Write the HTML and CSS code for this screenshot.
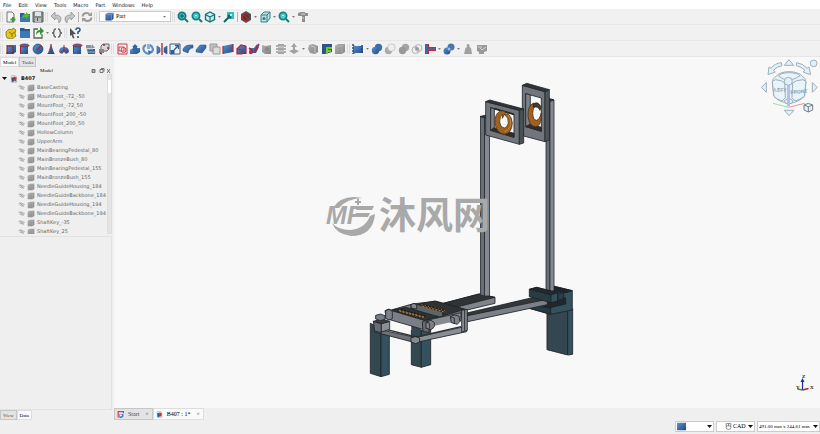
FILE: index.html
```html
<!DOCTYPE html>
<html lang="en">
<head>
<meta charset="utf-8">
<title>B407</title>
<link rel="stylesheet" href="styles.css">
</head>
<body>
<svg class="defs" aria-hidden="true">
  <defs>
    <linearGradient id="blue" x1="0" y1="0" x2="1" y2="1"><stop offset="0" stop-color="#5d93cf"/><stop offset="1" stop-color="#1f4a86"/></linearGradient>
    <linearGradient id="gray" x1="0" y1="0" x2="1" y2="1"><stop offset="0" stop-color="#b0b0b0"/><stop offset="1" stop-color="#858585"/></linearGradient>
    <symbol id="new" viewBox="0 0 12 12"><path d="M2 1h5l2 2v8H2z" fill="#f4f4f2" stroke="#777"/><path d="M8 6v5M5.500 8.500h5" stroke="#3f9b3a" stroke-width="2"/></symbol>
    <symbol id="open" viewBox="0 0 12 12"><path d="M1 2h4l1 1h5v8H1z" fill="#2b5c98"/><path d="M1 6h10v5H1z" fill="#3c76b8"/><path d="M3 7q0-4 4-4V1l4 3.500L7 8V6Q5 6 3 7z" fill="#58b63e"/></symbol>
    <symbol id="save" viewBox="0 0 12 12"><path d="M1 1h10v10H1z" fill="#85898a" stroke="#5d6264"/><path d="M3 1h6v4H3z" fill="#dce5e7"/><path d="M3 7h6v4H3z" fill="#b8bcbc"/><path d="M5 7h1v3H5z" fill="#555"/></symbol>
    <symbol id="undo" viewBox="0 0 12 12"><path d="M1 5l4-4v3q6 0 6 4 0 2-2 4 0-5-4-5v2z" fill="#c7c7c7" stroke="#929292" stroke-width=".8"/></symbol>
    <symbol id="redo" viewBox="0 0 12 12"><path d="M11 5L7 1v3Q1 4 1 8q0 2 2 4 0-5 4-5v2z" fill="#c7c7c7" stroke="#929292" stroke-width=".8"/></symbol>
    <symbol id="refresh" viewBox="0 0 12 12"><path d="M1.500 5.500Q2 2 6 2q2 0 3 2M10.500 6.500Q10 10 6 10 4 10 3 8" fill="none" stroke="#9a9a9a" stroke-width="2"/><path d="M11 1v4H7zM1 11V7h4z" fill="#9a9a9a"/></symbol>
    <symbol id="zoomall" viewBox="0 0 12 12"><circle cx="5" cy="5" r="3.600" fill="#45c5c2" stroke="#157a7c" stroke-width="1.800"/><path d="M8 8l3 3" stroke="#157a7c" stroke-width="2"/><path d="M5 3v4M3 5h4" stroke="#0a5558"/></symbol>
    <symbol id="zoomsel" viewBox="0 0 12 12"><circle cx="5" cy="5" r="3.600" fill="#55cfca" stroke="#168486" stroke-width="1.800"/><path d="M8 8l3 3" stroke="#157a7c" stroke-width="2"/><path d="M4 4h2v1H4z" fill="#fff"/></symbol>
    <symbol id="iso" viewBox="0 0 12 12"><path d="M6 1l4.500 2.500v5L6 11 1.500 8.500v-5z" fill="#d5f1ef" stroke="#187577" stroke-width="1.400"/><path d="M1.500 3.500L6 6l4.500-2.500M6 6v5" fill="none" stroke="#187577" stroke-width="1.200"/></symbol>
    <symbol id="viewlink" viewBox="0 0 12 12"><path d="M4 1h7v7H4z" fill="#2ebfc0"/><path d="M1 11l5-5M5 4l3 3" stroke="#116568" stroke-width="2"/><path d="M7 3h2v2H7z" fill="#b9f1ef"/></symbol>
    <symbol id="stop" viewBox="0 0 12 12"><path d="M6 0l5 3v6l-5 3-5-3V3z" fill="#1c6c70"/><circle cx="6" cy="6" r="3.600" fill="#284448" stroke="#b81e22" stroke-width="1.600"/><path d="M3.500 3.500l5 5" stroke="#c51c20" stroke-width="1.600"/></symbol>
    <symbol id="boxview" viewBox="0 0 12 12"><path d="M2 4l3-3h6v6l-3 4H2z" fill="#bee0df" stroke="#2e8688"/><path d="M2 4h6v7M8 4l3-3" fill="none" stroke="#2e8688"/><circle cx="5" cy="7.500" r="1.500" fill="#248184"/></symbol>
    <symbol id="measure" viewBox="0 0 12 12"><path d="M1 2l3-1h4v1h3v3H8v6H5V5H1z" fill="#8d8d8d"/><path d="M4 3h4M5 7h2" stroke="#d2d2d2"/></symbol>
    <symbol id="part" viewBox="0 0 12 12"><path d="M1 5l3-3 3 1 1-2 3 2-1 3 1 3-4 3-5-1-1-3z" fill="#e2c423" stroke="#8c7514" stroke-width=".8"/><path d="M4 5l3 2 3-2M7 7v3" fill="none" stroke="#92790c"/></symbol>
    <symbol id="folder" viewBox="0 0 12 12"><path d="M1 1h4l1 1h5v9H1z" fill="#28598f"/><path d="M1 4h10v7H1z" fill="#3f76b4"/></symbol>
    <symbol id="swatch" viewBox="0 0 12 12"><path d="M0 1h12v10H0z" fill="url(#blue)"/></symbol>
    <symbol id="link" viewBox="0 0 12 12"><path d="M6 2H2v9h8V7" fill="#f6f6f6" stroke="#5c655d" stroke-width="1.300"/><path d="M4 8q0-5 4-5V0l4 4-4 4V5q-2 0-4 3z" fill="#38903a"/></symbol>
    <symbol id="braces" viewBox="0 0 12 12"><path d="M5 2Q3 2 3 4q0 2-2 2 2 0 2 2 0 2 2 2M7 2q2 0 2 2 0 2 2 2-2 0-2 2 0 2-2 2" fill="none" stroke="#666" stroke-width="1.400"/></symbol>
    <symbol id="whats" viewBox="0 0 12 12"><path d="M1 1l6 6-3 .300L5.500 11 4 11.500 2.500 8 1 9z" fill="#4d5559"/><path d="M7 3q0-2 2-2t2 2q0 1-2 2v2M9 9v2" fill="none" stroke="#31567d" stroke-width="1.600"/></symbol>
    <symbol id="cube" viewBox="0 0 12 12"><path d="M1 3l3-1.500h7V9l-2.500 2H1z" fill="url(#blue)" stroke="#173a66" stroke-width=".6"/><path d="M8.500 3v8M1 3h8l2-1.500" fill="none" stroke="#88aed8" stroke-width=".8"/></symbol>
    <symbol id="box" viewBox="0 0 12 12"><path d="M2 3l2-1h7v7l-3 2H2z" fill="url(#blue)"/><path d="M2 2v9M1 10h8M8 3v8M2 3h6" fill="none" stroke="#7d2334"/></symbol>
    <symbol id="cylinder" viewBox="0 0 12 12"><path d="M3 2h7v9H3z" fill="url(#blue)"/><ellipse cx="6.500" cy="2.500" rx="4.500" ry="1.500" fill="#396da8" stroke="#8a2539" stroke-width=".8"/><path d="M2.500 3v8" stroke="#9b2638"/></symbol>
    <symbol id="sphere" viewBox="0 0 12 12"><circle cx="6" cy="6" r="5" fill="url(#blue)" stroke="#183b67" stroke-width=".6"/><path d="M5 7l4-4" stroke="#a62438" stroke-width="1.300"/></symbol>
    <symbol id="cone" viewBox="0 0 12 12"><path d="M6 1l3 9H3z" fill="url(#blue)"/><path d="M6 1v9M2.500 10.500h7" stroke="#8b2437"/></symbol>
    <symbol id="torus" viewBox="0 0 12 12"><path d="M1 9q0-5 5-5t5 5l-3 2-2-2-2 2z" fill="url(#blue)"/><path d="M6 2v5M2 10l4-3 4 3" fill="none" stroke="#9d293a"/></symbol>
    <symbol id="prims" viewBox="0 0 12 12"><path d="M1 2h5v3H1z" fill="#8c9299"/><path d="M2 6h8v5H3z" fill="#365f8d"/><path d="M7 1l3 4H6z" fill="#8795a5"/><path d="M1 6h7M3 9h8" stroke="#a9b6c4"/></symbol>
    <symbol id="shapebuild" viewBox="0 0 12 12"><path d="M3 3l2-2h6v5L9 8H3z" fill="#d8d8d8" stroke="#666"/><path d="M1 6h5v4H1z" fill="#888"/><path d="M5 2h2M10 4v2M2 10l2 1" stroke="#b22332" stroke-width="1.500"/></symbol>
    <symbol id="sketch" viewBox="0 0 12 12"><path d="M2 1h9v10H2z" fill="#faf4f4" stroke="#c53e44"/><path d="M3 4h5v4H3z" fill="none" stroke="#d1434b"/><circle cx="7.500" cy="7" r="2.500" fill="none" stroke="#d1434b"/></symbol>
    <symbol id="extrude" viewBox="0 0 12 12"><path d="M1 7l3-2h7v4l-3 2H1z" fill="url(#blue)"/><path d="M3 4l3-3 3 3H8v4H4V4z" fill="#32689f"/></symbol>
    <symbol id="revolve" viewBox="0 0 12 12"><path d="M4 2Q1 3 1.500 6.500 3 11 7 10.500M8 2q3 2 3 5l-2 3" fill="none" stroke="#5f8dbf" stroke-width="2.200"/><path d="M5 1h3v5H5z" fill="#8cb0d8"/><path d="M6 7l4 2-3 3z" fill="#396b9f"/></symbol>
    <symbol id="mirror" viewBox="0 0 12 12"><path d="M1 3l3 2v4l-3 2zM11 3L8 5v4l3 2z" fill="url(#blue)" stroke="#315e92" stroke-width=".7"/><path d="M6 0v12" stroke="#b52a3c" stroke-width="1.400"/></symbol>
    <symbol id="scale" viewBox="0 0 12 12"><path d="M1 1h10v10H1z" fill="#edf2f7" stroke="#345b86"/><path d="M1.500 7h4v4h-4z" fill="#315f92"/><path d="M5 7l4-4M6 2.500h3.500V6" fill="none" stroke="#315f92" stroke-width="1.300"/></symbol>
    <symbol id="fillet" viewBox="0 0 12 12"><path d="M1 6q2-4 6-4h4v3Q7 5 6 10L1 8z" fill="url(#blue)" stroke="#234f86" stroke-width=".5"/></symbol>
    <symbol id="chamfer" viewBox="0 0 12 12"><path d="M1 7l4-5h6v3l-4 5-6-1z" fill="url(#blue)" stroke="#234f86" stroke-width=".5"/></symbol>
    <symbol id="faces" viewBox="0 0 12 12"><path d="M1 1h7v7H1z" fill="#c2c2c2" stroke="#999"/><path d="M4 4h7v7H4z" fill="#ddd" stroke="#999"/></symbol>
    <symbol id="ruled" viewBox="0 0 12 12"><path d="M1 3l10-2v8L1 11z" fill="url(#blue)"/><path d="M1 3v8M11 1v8" stroke="#b32739" stroke-width="1.200"/></symbol>
    <symbol id="loft" viewBox="0 0 12 12"><path d="M2 6l4-4 5 1v8H2z" fill="url(#blue)"/><path d="M2 6l4-4 5 1M2 6v5h5V7zM11 3v8" fill="none" stroke="#b5243a" stroke-width="1.200"/></symbol>
    <symbol id="sweep" viewBox="0 0 12 12"><path d="M1 5h5l3-4 2 3-3 6H2z" fill="url(#blue)"/><path d="M7 8l4-7M1 5l3 2-2 4" fill="none" stroke="#b72339" stroke-width="1.600"/><circle cx="3" cy="9" r="2" fill="#af263b"/></symbol>
    <symbol id="section" viewBox="0 0 12 12"><path d="M1 2l4 1 5-1v9H4l-3-2z" fill="url(#gray)"/><circle cx="6" cy="6" r="2" fill="#8a8a8a"/></symbol>
    <symbol id="cross" viewBox="0 0 12 12"><path d="M1 3h10M1 6h10M1 9h10" stroke="#989898" stroke-width="1.600"/><path d="M3 1h6v10H3z" fill="#a5a5a5"/><path d="M3 4h6M3 8h6" stroke="#d8d8d8"/></symbol>
    <symbol id="offset" viewBox="0 0 12 12"><path d="M1 8l5-2 5 2-5 3zM6 0l3 4H7v3H5V4H3z" fill="#a2a2a2"/></symbol>
    <symbol id="thick" viewBox="0 0 12 12"><path d="M2 2l4-1 5 2v6l-3 2-5-1-2-4z" fill="url(#gray)"/><path d="M4 3l4 1v6" fill="none" stroke="#c2c2c2"/></symbol>
    <symbol id="project" viewBox="0 0 12 12"><path d="M1 1h10v8l-7 2H1z" fill="#27568d"/><path d="M5 4h6v2H7v1h3v2H7v2H5z" fill="#74cc25"/></symbol>
    <symbol id="graybox" viewBox="0 0 12 12"><path d="M1 3l3-2h7v8l-3 2H1z" fill="url(#gray)"/><path d="M1 3h7v8M8 3l3-2" fill="none" stroke="#b2b2b2" stroke-width=".7"/></symbol>
    <symbol id="compound" viewBox="0 0 12 12"><path d="M1 2l3 1h7v7H4l-3 1z" fill="url(#blue)"/><path d="M1 1v10M10 2v9" stroke="#244b7b" stroke-width="1.500" stroke-dasharray="2 1"/></symbol>
    <symbol id="boolean" viewBox="0 0 12 12"><circle cx="7.500" cy="4.500" r="3.700" fill="#396fae"/><circle cx="4.500" cy="7.500" r="3.700" fill="url(#blue)"/></symbol>
    <symbol id="cut" viewBox="0 0 12 12"><circle cx="4.500" cy="7.500" r="3.700" fill="#aaa"/><circle cx="7.500" cy="4.500" r="3.700" fill="#eee" stroke="#bbb" stroke-width=".7"/></symbol>
    <symbol id="union" viewBox="0 0 12 12"><circle cx="7.500" cy="4.500" r="3.700" fill="#a5a5a5"/><circle cx="4.500" cy="7.500" r="3.700" fill="#999"/></symbol>
    <symbol id="common" viewBox="0 0 12 12"><circle cx="7.500" cy="5" r="3.500" fill="none" stroke="#b2b2b2"/><circle cx="4.500" cy="7" r="3.500" fill="none" stroke="#b2b2b2"/><path d="M4.500 4Q8 4 8 7.500 4 8 4.500 4z" fill="#999"/></symbol>
    <symbol id="join" viewBox="0 0 12 12"><path d="M1 1h4v3h7v4H5v3H1z" fill="#b92c3d"/><path d="M2.500 1v10M4 6h8" stroke="#3c6fa9" stroke-width="1.600"/></symbol>
    <symbol id="split" viewBox="0 0 12 12"><circle cx="8" cy="4" r="3.500" fill="#4777ae"/><circle cx="4" cy="8" r="3.500" fill="url(#blue)"/><circle cx="6" cy="6" r="1.500" fill="#a2bdd9"/></symbol>
    <symbol id="weight" viewBox="0 0 12 12"><path d="M3.500 5L5 4Q4 1 6 1t1.500 3L9 5l1 6H2z" fill="#a0a0a0"/></symbol>
    <symbol id="check" viewBox="0 0 12 12"><path d="M1 2h10v6L8 9v2H3V9L1 8z" fill="#999"/><path d="M4 5l2 2 4-3M2 4h4" fill="none" stroke="#d5d5d5"/></symbol>
    <symbol id="doc" viewBox="0 0 12 12"><path d="M2 1h6l2 2v8H2z" fill="#eee" stroke="#aaa"/><path d="M2 4l4-1 1 6-4 2z" fill="#235b91"/><path d="M6 2l4 2-1 6-3-2z" fill="#c83434"/></symbol>
    <symbol id="start" viewBox="0 0 12 12"><path d="M2 11V1h9v3" fill="none" stroke="#dc3945" stroke-width="2"/><path d="M4 5h7v4l-3 3H4z" fill="#3b83d2"/><path d="M5 6h3v3H5z" fill="#fff"/></symbol>
    <symbol id="hidden" viewBox="0 0 12 12"><path d="M1 5q5-3 10 1-4 5-8 1M3 2l7 8" fill="none" stroke="#999" stroke-width="1.200"/><circle cx="6" cy="6" r="1.500" fill="#aaa"/></symbol>
    <symbol id="mouse" viewBox="0 0 12 12"><path d="M2 1h8v7q0 3-4 3T2 8z" fill="#fff" stroke="#444"/><path d="M6 1v4M2 5h8" stroke="#444"/></symbol>
  </defs>
</svg>

<div class="app">
  <nav class="menu">
    <a href="#">File</a><a href="#">Edit</a><a href="#">View</a><a href="#">Tools</a><a href="#">Macro</a><a href="#">Part</a><a href="#">Windows</a><a href="#">Help</a>
  </nav>

  <div class="toolbar">
    <i class="grip"></i>
    <div class="run w39"><button><svg><use href="#new"/></svg></button><button><svg><use href="#open"/></svg></button><button><svg><use href="#save"/></svg></button></div>
    <i class="grip"></i>
    <div class="run w26"><button><svg><use href="#undo"/></svg></button><button><svg><use href="#redo"/></svg></button></div>
    <i class="line"></i>
    <button><svg><use href="#refresh"/></svg></button>
    <i class="grip"></i>
    <label class="combo bench"><svg><use href="#cube"/></svg><select aria-label="Workbench"><option>Part</option></select><i class="caret"></i></label>
    <i class="grip"></i>
    <div class="run w39"><button><svg><use href="#zoomall"/></svg></button><button><svg><use href="#zoomsel"/></svg></button><button><svg><use href="#iso"/></svg></button></div>
    <i class="caret"></i>
    <button><svg><use href="#viewlink"/></svg></button>
    <i class="line"></i>
    <button><svg><use href="#stop"/></svg></button><i class="caret"></i>
    <button><svg><use href="#boxview"/></svg></button><i class="caret"></i>
    <button><svg><use href="#zoomsel"/></svg></button><i class="caret"></i>
    <button><svg><use href="#measure"/></svg></button>
  </div>

  <div class="toolbar">
    <i class="grip"></i>
    <div class="run w39"><button><svg><use href="#part"/></svg></button><button><svg><use href="#folder"/></svg></button><button><svg><use href="#link"/></svg></button></div>
    <i class="caret"></i>
    <button><svg><use href="#braces"/></svg></button>
    <i class="grip"></i>
    <button><svg><use href="#whats"/></svg></button>
  </div>

  <div class="toolbar">
    <i class="grip"></i>
    <div class="run w105"><button><svg><use href="#box"/></svg></button><button><svg><use href="#cylinder"/></svg></button><button><svg><use href="#sphere"/></svg></button><button><svg><use href="#cone"/></svg></button><button><svg><use href="#torus"/></svg></button><button><svg><use href="#cylinder"/></svg></button><button><svg><use href="#prims"/></svg></button><button><svg><use href="#shapebuild"/></svg></button></div>
    <i class="grip"></i>
    <div class="run w184"><button><svg><use href="#sketch"/></svg></button><button><svg><use href="#extrude"/></svg></button><button><svg><use href="#revolve"/></svg></button><button><svg><use href="#mirror"/></svg></button><button><svg><use href="#scale"/></svg></button><button><svg><use href="#fillet"/></svg></button><button><svg><use href="#chamfer"/></svg></button><button><svg><use href="#faces"/></svg></button><button><svg><use href="#ruled"/></svg></button><button><svg><use href="#loft"/></svg></button><button><svg><use href="#sweep"/></svg></button><button><svg><use href="#section"/></svg></button><button><svg><use href="#cross"/></svg></button><button><svg><use href="#offset"/></svg></button></div>
    <i class="caret"></i>
    <div class="run w39"><button><svg><use href="#thick"/></svg></button><button><svg><use href="#project"/></svg></button><button><svg><use href="#graybox"/></svg></button></div>
    <i class="grip"></i>
    <button><svg><use href="#compound"/></svg></button>
    <i class="caret"></i>
    <div class="run w65"><button><svg><use href="#boolean"/></svg></button><button><svg><use href="#cut"/></svg></button><button><svg><use href="#union"/></svg></button><button><svg><use href="#common"/></svg></button><button><svg><use href="#join"/></svg></button></div>
    <i class="caret"></i>
    <button><svg><use href="#split"/></svg></button>
    <i class="caret"></i>
    <div class="run w26"><button><svg><use href="#weight"/></svg></button><button><svg><use href="#check"/></svg></button></div>
  </div>

  <div class="work">
    <aside class="side">
      <div class="tabs top"><button class="tab on">Model</button><button class="tab">Tasks</button></div>
      <header class="dock"><span>Model</span>
        <svg viewBox="0 0 20 6"><path d="M1 1.500h3v3H1zM1 3h3M9 1.500h3v3H9zM10 .5h3v3M16 1l3 4M19 1l-3 4" fill="none" stroke="#555" stroke-width=".8"/></svg>
      </header>
      <div class="treebox">
        <ul class="tree">
          <li class="root"><i class="open"></i><svg><use href="#doc"/></svg><b>B407</b></li>
          <li><svg><use href="#hidden"/></svg><svg><use href="#graybox"/></svg>BaseCasting</li>
          <li><svg><use href="#hidden"/></svg><svg><use href="#graybox"/></svg>MountFoot_-72_-50</li>
          <li><svg><use href="#hidden"/></svg><svg><use href="#graybox"/></svg>MountFoot_-72_50</li>
          <li><svg><use href="#hidden"/></svg><svg><use href="#graybox"/></svg>MountFoot_200_-50</li>
          <li><svg><use href="#hidden"/></svg><svg><use href="#graybox"/></svg>MountFoot_200_50</li>
          <li><svg><use href="#hidden"/></svg><svg><use href="#graybox"/></svg>HollowColumn</li>
          <li><svg><use href="#hidden"/></svg><svg><use href="#graybox"/></svg>UpperArm</li>
          <li><svg><use href="#hidden"/></svg><svg><use href="#graybox"/></svg>MainBearingPedestal_80</li>
          <li><svg><use href="#hidden"/></svg><svg><use href="#graybox"/></svg>MainBronzeBush_80</li>
          <li><svg><use href="#hidden"/></svg><svg><use href="#graybox"/></svg>MainBearingPedestal_155</li>
          <li><svg><use href="#hidden"/></svg><svg><use href="#graybox"/></svg>MainBronzeBush_155</li>
          <li><svg><use href="#hidden"/></svg><svg><use href="#graybox"/></svg>NeedleGuideHousing_184</li>
          <li><svg><use href="#hidden"/></svg><svg><use href="#graybox"/></svg>NeedleGuideBackbone_184</li>
          <li><svg><use href="#hidden"/></svg><svg><use href="#graybox"/></svg>NeedleGuideHousing_194</li>
          <li><svg><use href="#hidden"/></svg><svg><use href="#graybox"/></svg>NeedleGuideBackbone_194</li>
          <li><svg><use href="#hidden"/></svg><svg><use href="#graybox"/></svg>ShaftKey_-35</li>
          <li><svg><use href="#hidden"/></svg><svg><use href="#graybox"/></svg>ShaftKey_25</li>
        </ul>
        <div class="scroll"><i></i></div>
      </div>
      <div class="props"></div>
      <div class="tabs bottom"><button class="tab">View</button><button class="tab on">Data</button></div>
    </aside>

    <main class="mdi">
      <svg class="scene" viewBox="114 57 706 351">
        <g transform="translate(355 270) scale(.3333)" stroke="#1d2226" stroke-width="2.500" stroke-linejoin="round">
          <path d="M576 128l62-8v135l-62-16z" fill="#34464f"/><path d="M638 120l15-4v137l-13 2-2-1z" fill="#34515f"/>
          <path d="M594 48l58 14v58l-65 13-64-18v-9l70-20z" fill="#34515f"/>
          <path d="M523 106l64 8v19l-64-18z" fill="#293941"/>
          <path d="M594 48l58 14-24 7-34-8z" fill="#1d272b"/>
          <path d="M600 84l32-1v19l-46 11-42-10z" fill="#20282c"/><path d="M608 70l18-3v19l-18 6z" fill="#2c3d46"/>
        </g>
        <g stroke="#23272b" stroke-width=".8">
          <path d="M546 99h4v195h-4z" fill="#686e75"/><path d="M550 99l4 1v190l-4 3z" fill="#868b93"/>
        </g>
        <g transform="translate(355 270) scale(.3333)" stroke="#1d2226" stroke-width="2.500" stroke-linejoin="round">
          <path d="M335 132l210-50 32 8v14l-239 51z" fill="#7b8087"/><path d="M335 129l210-49 32 8-240 49z" fill="#35383b"/>
          <path d="M523 58l22-6 63 16v25l-20 5-65-18z" fill="#293b44"/><path d="M523 58l22-6 63 16-20 7z" fill="#202a2e"/><path d="M588 75l20-7v25l-20 5z" fill="#34515f"/>
          <path d="M250 104l122-32 48 10v18l-92 22z" fill="#80848a"/><path d="M250 104l122-32 48 10-118 30z" fill="#303335"/>
        </g>
        <g stroke="#23272b" stroke-width=".8">
          <path d="M480.500 116l4 1v179l-4-1z" fill="#686e75"/><path d="M484.500 117l5-1v180h-5z" fill="#858a92"/>
        </g>
        <g transform="translate(355 270) scale(.3333)" stroke="#1f2225" stroke-width="2.500" stroke-linejoin="round">
          <path d="M46 160l32 15v145l-32-10z" fill="#344850"/><path d="M78 185l25 5v123l-25 7z" fill="#34515f"/>
          <path d="M169 165l30 15v112l-30-8z" fill="#344850"/><path d="M199 182l28-6v108l-28 8z" fill="#34515f"/>
          <path d="M168 103l12-2 60-7 95 26v17l-80 24-150-40z" fill="#74797f"/>
          <path d="M185 103l56-10 90 25-70 20z" fill="#303234"/>
          <path d="M168 104l12-3 83 25v13l-20 3-75-25z" fill="#5f646a"/><path d="M113 120l38-8 100 28-42 12z" fill="#303234"/>
          <path d="M90 122l12-5 8 5 100 30v28l-116-34z" fill="#7a7f86"/><path d="M210 152l108-24v24l-108 28z" fill="#868b92"/>
          <path d="M114 157l55 13v10l-60-8zM236 168l44-10 35-2v14l-79 18z" fill="#f8f8f8" stroke="none"/>
          <path d="M62 176l122 27-4 15-122-32z" fill="#6c7278"/><path d="M180 203l148-33 7 6v9l-155 33z" fill="#898e95"/>
          <path d="M72 173l112 28 134-31" fill="none" stroke="#303336" stroke-width="4"/>
          <path d="M320 121l17-3v63l-17 5z" fill="#858a91"/><path d="M329 120v62" fill="none"/>
          <path d="M55 154l24 7v27l-20-5z" fill="#666d73"/><path d="M79 161l25-7v24l-25 8z" fill="#8b9096"/><path d="M55 154l25-7 24 7-25 7z" fill="#3a3e41"/>
          <path d="M62 136l14-4 14 5v11l-14 4-14-5z" fill="#787e84"/><path d="M92 122l10-4 10 6v22l-10 4-10-5z" fill="#7c8289"/><path d="M168 104l9-4 8 5v12l-16-3z" fill="#858a91"/>
          <path d="M202 156l10-5 10 3v34l-18-4z" fill="#676d74"/><path d="M168 203l14-3 12 4v12l-12 5-14-5z" fill="#858a91"/>
          <path d="M213 156l15-5 10 7v12l-10 9-15-4z" fill="#7e8389"/><path d="M286 140l12-5 14 3 3 16-8 9-18-5z" fill="#7e8389"/><path d="M286 140l12 4v18M213 156l11 4v16" fill="none"/>
          <path d="M203 108l68 18M134 123l74 19" fill="none" stroke="#b57624" stroke-width="5" stroke-dasharray="5 5"/>
          <path d="M203 104l68 18M138 119l74 19" fill="none" stroke="#17191a" stroke-width="4" stroke-dasharray="6 4"/>
          <path d="M200 104l70 18M132 121l74 19" fill="none" stroke="#d09b42" stroke-width="2" stroke-dasharray="3 7"/>
        </g>
        <g transform="translate(465 75) scale(.3333)" stroke="#23272a" stroke-width="2.500" stroke-linejoin="round">
          <path d="M243 75l10-4 14 4-10 4z" fill="#313538"/>
          <path fill-rule="evenodd" d="M172 31l68 19v150l-68-18zM182 56v99l47 14V69z" fill="#70767c"/>
          <path d="M240 50l13-6v151l-13 5z" fill="#51565b"/><path d="M172 31l13-6 68 19-13 6z" fill="#303437"/>
          <path d="M182 56l14 4v90l-14 5z" fill="#7d8288"/><path d="M182 155l14-8 33 10v12z" fill="#2b2d2f"/>
          <path d="M206 84q-18 8-17 38 3 31 22 33 16 0 18-29v-12q-6 22-15 22-10-1-11-22 0-14 9-24z" fill="#9f6022" stroke="#51300f"/><path d="M204 88q14-12 24 8l-3 10q-6-14-19-9z" fill="#4a3a2c"/>
          <path d="M46 125l12-4 16 4-10 5z" fill="#313538"/>
          <path fill-rule="evenodd" d="M62 80l101 26v102L62 180zM77 98v68l70 21v-69z" fill="#70767c"/>
          <path d="M163 106l13-4v102l-13 4z" fill="#4a4f54"/><path d="M62 80l12-5 102 27-13 4z" fill="#303437"/>
          <path d="M77 98l11 3v57l-11 8z" fill="#7d8288"/><path d="M77 166l11-8 59 17v12z" fill="#2b2d2f"/><path d="M88 101l59 17" fill="none" stroke-width="5"/>
          <path d="M106 108q-18 9-16 38 5 29 28 32 22-2 24-34-1-17-13-28l-10 2q13 11 11 27-3 13-12 14-13-3-14-21 0-14 9-20l-1 12 5-9q2-6 6-8-6-7-17-5z" fill="#9f6022" stroke="#573512"/>
          <path d="M129 120q11 12 8 30-6 18-19 19" fill="none" stroke="#c98540" stroke-width="3"/>
        </g>
        <g class="mark">
          <path d="M333 208q9-14 29-10-16 1-23 10zM332 223q6 7 18 7 15-1 20-14l5-2q-2 22-24 22-15-2-19-13z"/>
          <path d="M357 199h2v2h2v2h-2v2h-2v-2h-2v-2h2zM358 206h16l-2 4h-16zM356 213h14l-2 4h-14z"/>
          <text class="mf" x="326" y="224">MF</text>
          <text class="brand" x="379" y="229">沐风网</text>
        </g>
        <g class="navcube" transform="translate(750 50) scale(.3333)" fill="#e2f0f8" stroke="#9cafbb" stroke-width="3" stroke-linejoin="round">
          <path d="M103 46l14-17 14 17zM103 181h29l-15 16zM49 98v29l-15-15zM187 98v29l15-15z"/>
          <path d="M94 38q-20 2-31 17l-6-4-3 23 22-8-6-5q10-11 26-14zM140 38q20 3 31 17l6-4 5 23-23-8 6-5q-10-10-26-14z"/>
          <circle cx="191" cy="40" r="10"/>
          <path d="M67 96q0-10 11-17 13-14 39-14t40 13q11 8 11 18l-4 42q-18 20-47 22-30-3-46-22z"/>
          <path d="M86 78q4-9 31-10 27 1 33 9-12 8-22 11H103q-9-4-17-10zM67 94l10-5q20 2 27 10l2 44-10 10q-15-4-24-14zM168 94l-9-5q-24 2-31 10l-2 44 9 10q16-4 28-14z" fill="#e9f4fa"/>
          <path d="M103 152l13-8 13 8-3 8h-20z"/>
          <text x="72" y="125" transform="rotate(4 85 120)">LEFT</text><text x="121" y="130" transform="rotate(-4 145 125)">FRONT</text>
          <path d="M69 160l47 12" stroke="#94e69b"/><path d="M116 172l48-12" stroke="#ed9292"/>
          <path d="M113 104h5v64h-5z" fill="#b5bff5" stroke="#b0baf2"/>
          <circle cx="115" cy="94" r="12"/>
          <path d="M162 165l13-5 13 5v15l-13 6-13-6zM162 165l13 5 13-5M175 170v16" stroke="#717e85"/>
        </g>
        <g fill="none" stroke-width="1.200">
          <path d="M802.500 390v-10" stroke="#2929a0"/><path d="M802.500 378l-2 4h4z" fill="#2929a0" stroke="none"/>
          <path d="M802.500 390l-5-1" stroke="#2c9b34" stroke-width="1.500"/><path d="M802.500 390l6-1.500" stroke="#a32b32" stroke-width="1.500"/>
        </g>
        <g class="axis"><text x="802" y="378">Z</text><text x="796" y="389">Y</text><text x="810" y="389">X</text></g>
      </svg>
      <div class="tabs docs"><button class="tab"><svg><use href="#start"/></svg>Start<span>×</span></button><button class="tab on"><svg><use href="#doc"/></svg>B407 : 1*<span>×</span></button></div>
    </main>
  </div>

  <footer class="status">
    <label class="combo color"><svg><use href="#swatch"/></svg><select aria-label="Notifications"><option></option></select><i class="open"></i></label>
    <label class="combo cad"><svg><use href="#mouse"/></svg><select aria-label="Navigation style"><option>CAD</option></select><i class="open"></i></label>
    <label class="combo size"><select aria-label="Dimensions"><option>491.00 mm x 244.61 mm</option></select><i class="open"></i></label>
  </footer>
</div>
</body>
</html>
```
FILE: styles.css
```css
* { box-sizing: border-box; }
html, body { margin: 0; height: 100%; }
body { background: #efefef; color: #222; font: 5px/9px "DejaVu Sans", sans-serif; }
button, select { font: inherit; color: inherit; background: none; border: 0; margin: 0; padding: 0; }
svg { display: block; flex: none; }
.defs { position: absolute; width: 0; height: 0; }
.app { display: flex; flex-direction: column; min-height: 100vh; }

.menu { display: flex; gap: 7px; height: 9px; padding: 0 3px; background: #fff; line-height: 10px; }
.menu a { color: #111; text-decoration: none; }

.toolbar { display: flex; align-items: center; height: 16px; border-bottom: 1px solid #e6e6e6; background: #f1f1f1; }
.toolbar button { flex: none; width: 12px; height: 12px; }
.toolbar button svg { width: 12px; height: 12px; }
.run { display: flex; flex: none; justify-content: space-between; }
.w26 { width: 26px; }
.w39 { width: 39px; }
.w65 { width: 65px; }
.w105 { width: 105px; }
.w184 { width: 184px; }
.grip { flex: none; width: 3px; height: 10px; margin: 0 2px 0 1px; border: 1px solid #dedede; border-width: 0 1px; }
.toolbar .grip:first-child { margin-left: 0; }
.line { flex: none; width: 1px; height: 10px; margin: 0 2px; background: #b5b5b5; }
.caret { flex: none; width: 7px; height: 2px; background: #777; clip-path: polygon(2px 0, 5px 0, 4px 2px, 3px 2px); }

.combo { display: flex; align-items: center; height: 11px; padding: 0 2px; border: 1px solid #ccc; background: #fff; }
.combo svg { width: 9px; height: 9px; }
.combo select { flex: 1; min-width: 0; height: 9px; padding: 0 2px; appearance: none; font: 6px/9px "Liberation Serif", serif; color: #000; }
.bench { width: 72px; padding-left: 5px; }

.work { display: flex; flex: 1; min-height: 0; gap: 2px; }
.side { display: flex; flex-direction: column; width: 112px; flex: none; }
.tabs { display: flex; flex: none; font: 5px/9px "Liberation Serif", serif; }
.tab { height: 10px; padding: 0 2px; border: 1px solid #c6c6c6; background: #e3e3e3; color: #444; }
.tab.on { background: #fafafa; color: #000; border-color: #ddd; }
.dock { display: flex; align-items: center; justify-content: flex-end; gap: 38px; height: 7px; padding-right: 1px; font: 5px/7px "Liberation Serif", serif; color: #000; }
.dock svg { width: 20px; height: 6px; }
.treebox { display: flex; height: 160px; margin-bottom: 2px; overflow: hidden; }
.tree { flex: 1; min-width: 0; height: 160px; margin: 0; padding: 0; overflow: hidden; list-style: none; color: #666; }
.tree li { display: flex; align-items: center; gap: 2px; height: 9px; padding-left: 18px; white-space: nowrap; }
.tree svg { width: 8px; height: 8px; }
.tree svg:first-child { width: 7px; height: 7px; }
.tree .root { gap: 3px; padding-left: 2px; color: #111; }
.open { flex: none; width: 5px; height: 3px; background: #111; clip-path: polygon(0 0, 100% 0, 50% 100%); }
.scroll { flex: none; width: 5px; padding-top: 5px; border: 1px solid #ddd; background: #e4e4e4; }
.scroll i { display: block; height: 13px; background: #fff; }
.props { flex: 1; border: 1px solid #e2e2e2; border-width: 1px 1px 1px 0; }

.mdi { display: flex; flex-direction: column; flex: 1; min-width: 0; }
.scene { flex: 1 1 0; width: 100%; min-height: 0; background: #f8f8f8; }
.scene text { stroke: none; }
.mark { fill: #a9a9a9; }
.mf { font: italic bold 25px "Liberation Sans", sans-serif; }
.brand { font: bold 37px "Noto Sans CJK SC", sans-serif; }
.navcube text { fill: #8e9ba4; font: bold 15px "Liberation Sans", sans-serif; }
.axis { font: bold 5px "Liberation Serif", serif; fill: #222; }
.docs { font-size: 6px; }
.docs .tab { display: flex; align-items: center; gap: 4px; height: 12px; padding: 0 3px 0 2px; }
.docs .tab svg { width: 7px; height: 7px; }
.docs .tab span { margin-left: 2px; color: #555; }

.status { display: flex; justify-content: flex-end; align-items: center; gap: 2px; height: 14px; padding-bottom: 1px; }
.status .combo { padding: 0 1px; }
.color { width: 39px; }
.cad { width: 39px; }
.cad svg { width: 7px; height: 7px; margin-left: 7px; }
.cad select { padding: 0 0 0 1px; }
.size { width: 63px; }
.size select { font-size: 5px; padding: 0; }
```
